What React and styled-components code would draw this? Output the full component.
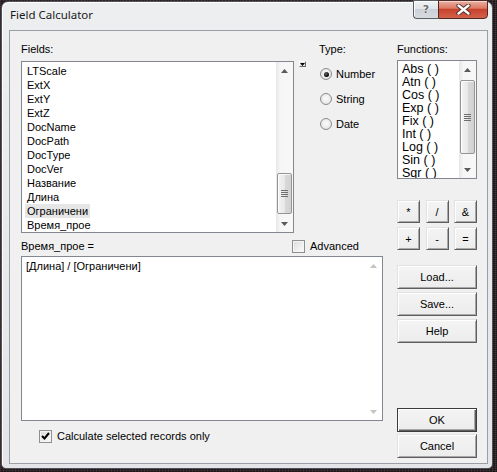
import React from 'react';
import styled, { createGlobalStyle } from 'styled-components';

const GlobalStyle = createGlobalStyle`
  html, body { margin: 0; padding: 0; }
  body {
    width: 497px;
    height: 472px;
    overflow: hidden;
    background-color: #2b2326;
    background-image:
      repeating-linear-gradient(0deg, rgba(0,0,0,0.35) 0 1px, transparent 1px 2px),
      repeating-linear-gradient(90deg, rgba(140,100,100,0.3) 0 1px, transparent 1px 3px);
    font-family: "Liberation Sans", Arial, sans-serif;
    font-size: 11px;
    color: #000;
  }
  #root { padding: 1px 0 0 1px; }
`;

const Window = styled.div`
  width: 492px;
  height: 468px;
  box-sizing: border-box;
  border: 1px solid #50545a;
  border-radius: 7px 7px 5px 5px;
  background: linear-gradient(#eceef0, #e3e5e8);
  box-shadow: inset 1px 1px 0 rgba(255, 255, 255, 0.9);
  padding: 0 4px 4px 7px;
  display: flex;
  flex-direction: column;
`;

const TitleBar = styled.div`
  height: 28px;
  display: flex;
  align-items: flex-start;
`;

const Title = styled.div`
  flex: 1;
  margin: 6px 0 0 1px;
  font-family: "Noto Sans", "Liberation Sans", sans-serif;
  font-size: 11.5px;
  line-height: 14px;
  color: #1a1a1a;
`;

const CaptionButtons = styled.div`
  display: flex;
  margin-top: -2px;
  height: 19px;
`;

const HelpBtn = styled.div`
  width: 25px;
  height: 19px;
  box-sizing: border-box;
  border: 1px solid #5a5f66;
  border-right: none;
  border-radius: 0 0 0 4px;
  background: linear-gradient(#f1f3f5 0%, #e1e5e9 45%, #cbd1d8 50%, #d6dbe0 100%);
  box-shadow: inset 1px 1px 0 rgba(255,255,255,0.8);
  display: flex;
  align-items: center;
  justify-content: center;
  font-family: "DejaVu Sans", sans-serif;
  font-weight: bold;
  font-size: 11px;
  color: #6a6e73;
  text-shadow: 0 0 2px #fff, 0 0 1px #fff;
`;

const CloseBtn = styled.div`
  width: 50px;
  height: 19px;
  box-sizing: border-box;
  border: 1px solid #4f2a25;
  border-radius: 0 0 4px 0;
  background: linear-gradient(#eab0a3 0%, #dc7a66 42%, #c8432e 50%, #d2624a 100%);
  box-shadow: inset 0 1px 0 rgba(255,255,255,0.5);
  display: flex;
  align-items: center;
  justify-content: center;
`;

const Client = styled.div`
  height: 434px;
  box-sizing: border-box;
  border: 1px solid #9a9fa6;
  background: #f0f0f0;
  padding: 11px 10px 0 11px;
  display: flex;
  gap: 14px;
`;

const LeftColumn = styled.div`
  width: 362px;
  display: flex;
  flex-direction: column;
`;

const RightColumn = styled.div`
  width: 80px;
  display: flex;
  flex-direction: column;
`;

const TopRow = styled.div`
  display: flex;
`;

const Block = styled.div`
  display: flex;
  flex-direction: column;
  margin-left: ${(p) => p.$ml || 0}px;
`;

const Label = styled.div`
  height: 14px;
  line-height: 14px;
  white-space: nowrap;
`;

const ListRow = styled.div`
  display: flex;
  align-items: flex-start;
  margin-top: 5px;
`;

const ListBox = styled.div`
  width: ${(p) => p.$w}px;
  height: ${(p) => p.$h}px;
  box-sizing: border-box;
  border: 1px solid #828790;
  background: #fff;
  display: flex;
  margin-top: ${(p) => p.$mt || 0}px;
`;

const Items = styled.div`
  flex: 1;
  overflow: hidden;
  padding: 2px 0 0 ${(p) => p.$pl}px;
  font-size: ${(p) => p.$fs}px;
`;

const Item = styled.div`
  width: fit-content;
  height: ${(p) => p.$lh}px;
  line-height: ${(p) => p.$lh}px;
  padding: 0 2px;
  white-space: nowrap;
  background: ${(p) => (p.$selected ? '#e6e6e6' : 'transparent')};
`;

const SBar = styled.div`
  width: 17px;
  flex: none;
  display: flex;
  flex-direction: column;
  background: ${(p) =>
    p.$disabled ? '#fff' : 'linear-gradient(90deg, #e6e6e6, #f6f6f6 25%, #f8f8f8)'};
`;

const SBArrow = styled.div`
  height: 17px;
  flex: none;
  display: flex;
  align-items: center;
  justify-content: center;
`;

const SBTrack = styled.div`
  flex: 1;
  display: flex;
  flex-direction: column;
  align-items: center;
`;

const SBThumb = styled.div`
  margin-top: ${(p) => p.$top}px;
  height: ${(p) => p.$height}px;
  width: 15px;
  box-sizing: border-box;
  border: 1px solid #959595;
  border-radius: 2px;
  background: linear-gradient(90deg, #f4f4f4, #e8e8e8 50%, #d9d9d9 51%, #d2d2d2);
  box-shadow: inset 1px 1px 0 rgba(255,255,255,0.8);
  display: flex;
  align-items: center;
  justify-content: center;
`;

const Grip = styled.span`
  width: 7px;
  height: 7px;
  background: repeating-linear-gradient(#6f6f6f 0 1px, transparent 1px 2px);
`;

const TinyButton = styled.div`
  width: 7px;
  height: 6px;
  margin-left: 5px;
  box-sizing: border-box;
  border: 1px solid;
  border-color: #fff #6a6a6a #6a6a6a #fff;
  background: #e4e4e4;
  display: flex;
  align-items: flex-end;
  justify-content: center;
`;

const RadioList = styled.div`
  display: flex;
  flex-direction: column;
  gap: 11px;
  margin-top: 11px;
`;

const OptionRow = styled.label`
  display: flex;
  align-items: center;
  gap: ${(p) => p.$gap || 4}px;
  height: 14px;
  line-height: 14px;
  white-space: nowrap;
  margin-left: ${(p) => p.$ml || 0}px;
`;

const RadioCircle = styled.span`
  width: 12px;
  height: 12px;
  box-sizing: border-box;
  border-radius: 50%;
  border: 1px solid #8c8c8c;
  background: radial-gradient(circle at 50% 45%, #fbfbfb 0%, #ececec 55%, #d4d4d4 100%);
  display: flex;
  align-items: center;
  justify-content: center;
  &::after {
    content: '';
    width: 5px;
    height: 5px;
    border-radius: 50%;
    background: ${(p) => (p.$checked ? 'radial-gradient(circle at 40% 35%, #666, #000 70%)' : 'transparent')};
  }
`;

const CheckBox = styled.span`
  width: 13px;
  height: 13px;
  box-sizing: border-box;
  border: 1px solid #8e8f8f;
  background: linear-gradient(135deg, #dadada, #fdfdfd);
  box-shadow: inset 0 0 0 1px #f4f4f4;
  display: flex;
  align-items: center;
  justify-content: center;
  flex: none;
`;

const ExprRow = styled.div`
  display: grid;
  grid-template-columns: 271px auto;
  align-items: center;
  height: 14px;
  margin-top: 6px;
`;

const ExprBox = styled.div`
  width: 362px;
  height: 165px;
  box-sizing: border-box;
  border: 1px solid #828790;
  background: #fff;
  display: flex;
  margin-top: 3px;
`;

const ExprText = styled.div`
  flex: 1;
  padding: 2px 0 0 4px;
  line-height: 14px;
  white-space: nowrap;
`;

const CalcRow = styled.div`
  margin-top: 8px;
  padding-left: 18px;
`;

const OpGrid = styled.div`
  display: grid;
  grid-template-columns: repeat(3, 23px);
  justify-content: space-between;
  row-gap: 4px;
  margin-top: 21px;
`;

const PushButton = styled.div`
  width: ${(p) => p.$w || 80}px;
  height: ${(p) => p.$h || 24}px;
  box-sizing: border-box;
  margin-top: ${(p) => p.$mt || 0}px;
  background: linear-gradient(#f4f4f4, #ececec);
  border: 1px solid;
  border-color: ${(p) => (p.$default ? '#3c3c3c' : '#e2e2e2 #5e5e5e #5e5e5e #e2e2e2')};
  box-shadow: ${(p) =>
    p.$default
      ? 'inset 1px 1px 0 #fff, inset -1px -1px 0 #5e5e5e, inset -2px -2px 0 #a8a8a8'
      : 'inset 1px 1px 0 #fff, inset -1px -1px 0 #a8a8a8'};
  display: flex;
  align-items: center;
  justify-content: center;
  font-size: 11px;
  line-height: 14px;
  white-space: nowrap;
`;

const Arrow = ({ dir, color }) => (
  <svg width="7" height="4" viewBox="0 0 7 4">
    <path d={dir === 'up' ? 'M0 4 L3.5 0 L7 4 Z' : 'M0 0 L7 0 L3.5 4 Z'} fill={color} />
  </svg>
);

const ScrollBar = ({ thumbTop, thumbHeight, disabled }) => {
  const c = disabled ? '#c4c4c4' : '#5a5a5a';
  return (
    <SBar $disabled={disabled}>
      <SBArrow><Arrow dir="up" color={c} /></SBArrow>
      <SBTrack>
        {!disabled && (
          <SBThumb $top={thumbTop} $height={thumbHeight}>
            <Grip />
          </SBThumb>
        )}
      </SBTrack>
      <SBArrow><Arrow dir="down" color={c} /></SBArrow>
    </SBar>
  );
};

const CheckMark = () => (
  <svg width="9" height="8" viewBox="0 0 9 8">
    <path d="M1 4 L3.5 6.5 L8 1" stroke="#000" strokeWidth="2" fill="none" />
  </svg>
);

const fields = [
  'LTScale', 'ExtX', 'ExtY', 'ExtZ', 'DocName', 'DocPath', 'DocType', 'DocVer',
  'Название', 'Длина', 'Ограничени', 'Время_прое',
];

const functions = ['Abs ( )', 'Atn ( )', 'Cos ( )', 'Exp ( )', 'Fix ( )', 'Int ( )', 'Log ( )', 'Sin ( )', 'Sqr ( )'];

const ops = ['*', '/', '&', '+', '-', '='];

export default function App() {
  return (
    <>
      <GlobalStyle />
      <Window>
        <TitleBar>
          <Title>Field Calculator</Title>
          <CaptionButtons>
            <HelpBtn>?</HelpBtn>
            <CloseBtn>
              <svg width="15" height="11" viewBox="0 0 15 11">
                <path d="M2.5 1.5 L12.5 9.5 M12.5 1.5 L2.5 9.5" stroke="#4a2a24" strokeWidth="4.2" strokeLinecap="round" />
                <path d="M2.5 1.5 L12.5 9.5 M12.5 1.5 L2.5 9.5" stroke="#fff" strokeWidth="2.4" strokeLinecap="round" />
              </svg>
            </CloseBtn>
          </CaptionButtons>
        </TitleBar>
        <Client>
          <LeftColumn>
            <TopRow>
              <Block>
                <Label>Fields:</Label>
                <ListRow>
                  <ListBox $w={273} $h={172}>
                    <Items $pl={3} $fs={11}>
                      {fields.map((f) => (
                        <Item key={f} $lh={14} $selected={f === 'Ограничени'}>{f}</Item>
                      ))}
                    </Items>
                    <ScrollBar thumbTop={94} thumbHeight={41} />
                  </ListBox>
                  <TinyButton>
                    <svg width="5" height="3" viewBox="0 0 5 3">
                      <path d="M0 0 L5 0 L2.5 3 Z" fill="#000" />
                    </svg>
                  </TinyButton>
                </ListRow>
              </Block>
              <Block $ml={13}>
                <Label>Type:</Label>
                <RadioList>
                  <OptionRow $ml={1}><RadioCircle $checked />Number</OptionRow>
                  <OptionRow $ml={1}><RadioCircle />String</OptionRow>
                  <OptionRow $ml={1}><RadioCircle />Date</OptionRow>
                </RadioList>
              </Block>
            </TopRow>
            <ExprRow>
              <Label>Время_прое =</Label>
              <OptionRow $gap={5}><CheckBox />Advanced</OptionRow>
            </ExprRow>
            <ExprBox>
              <ExprText>[Длина] / [Ограничени]</ExprText>
              <ScrollBar disabled />
            </ExprBox>
            <CalcRow>
              <OptionRow $gap={5}><CheckBox><CheckMark /></CheckBox>Calculate selected records only</OptionRow>
            </CalcRow>
          </LeftColumn>
          <RightColumn>
            <Label>Functions:</Label>
            <ListBox $w={80} $h={119} $mt={4}>
              <Items $pl={2} $fs={12.5}>
                {functions.map((f) => (
                  <Item key={f} $lh={13}>{f}</Item>
                ))}
              </Items>
              <ScrollBar thumbTop={2} thumbHeight={74} />
            </ListBox>
            <OpGrid>
              {ops.map((o) => (
                <PushButton key={o} $w={23} $h={23}>{o}</PushButton>
              ))}
            </OpGrid>
            <PushButton $mt={15}>Load...</PushButton>
            <PushButton $mt={3}>Save...</PushButton>
            <PushButton $mt={3}>Help</PushButton>
            <PushButton $mt={65} $default>OK</PushButton>
            <PushButton $mt={2}>Cancel</PushButton>
          </RightColumn>
        </Client>
      </Window>
    </>
  );
}
